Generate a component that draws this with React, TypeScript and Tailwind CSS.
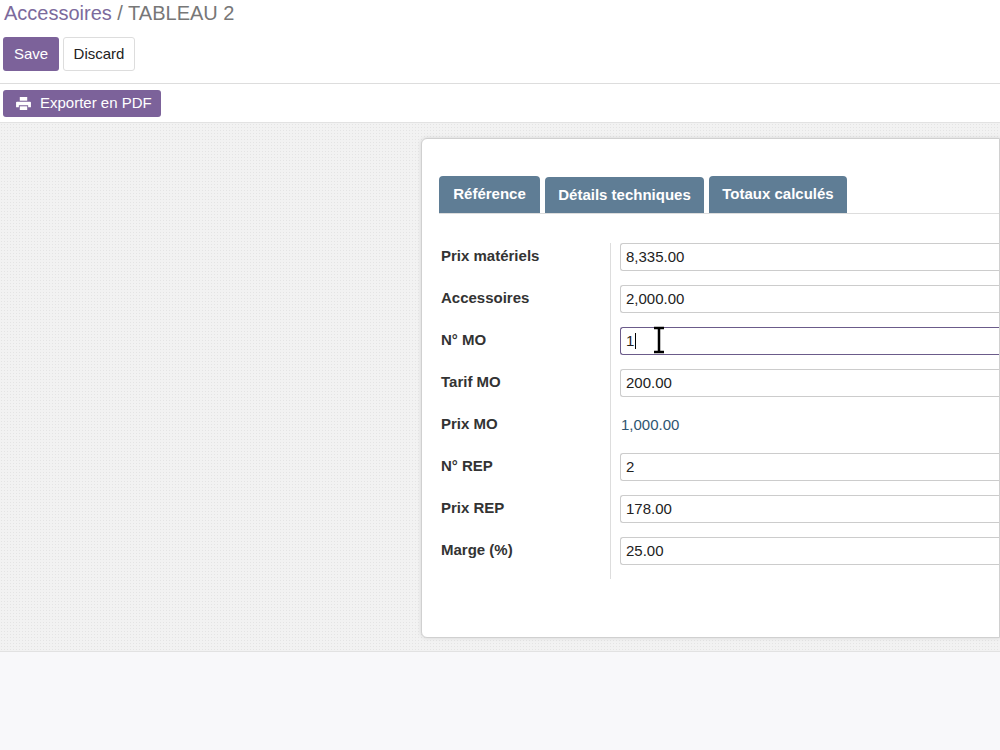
export default function App() {
  const rows: { label: string; value: string; input: boolean; focus?: boolean }[] = [
    { label: "Prix matériels", value: "8,335.00", input: true },
    { label: "Accessoires", value: "2,000.00", input: true },
    { label: "N° MO", value: "1", input: true, focus: true },
    { label: "Tarif MO", value: "200.00", input: true },
    { label: "Prix MO", value: "1,000.00", input: false },
    { label: "N° REP", value: "2", input: true },
    { label: "Prix REP", value: "178.00", input: true },
    { label: "Marge (%)", value: "25.00", input: true },
  ];
  const tabs = [
    { t: "Référence", w: "w-[101px]" },
    { t: "Détails techniques", w: "w-[159px]" },
    { t: "Totaux calculés", w: "w-[138px]" },
  ];
  return (
    <div className="w-[1000px] h-[750px] overflow-hidden bg-[#f8f8fa] text-[#333]" style={{ fontFamily: "'Liberation Sans', Arial, sans-serif" }}>
      <div className="bg-white">
        <div className="px-[4px] pt-[1px] h-[30px] text-[20px] leading-[24px]">
          <span className="text-[#7c6a9c]">Accessoires</span>
          <span className="text-[#777]"> / TABLEAU 2</span>
        </div>
        <div className="flex gap-[4px] px-[3px] pt-[7px] pb-[12px]">
          <button className="h-[34px] w-[56px] rounded-[3px] bg-[#7c629a] text-white text-[15px]">Save</button>
          <button className="h-[34px] w-[72px] rounded-[3px] bg-white border border-[#ddd] text-[#222] text-[15px]">Discard</button>
        </div>
        <div className="border-t border-[#ddd] px-[3px] pt-[6px] pb-[5px]">
          <button className="h-[27px] w-[158px] pl-[13px] flex items-center gap-[9px] rounded-[3px] bg-[#7c629a] text-white text-[15px]">
            <svg width="15" height="13" viewBox="0 0 16 14" fill="white">
              <rect x="4" y="0" width="8" height="4" />
              <path d="M1 5h14a1 1 0 0 1 1 1v5h-3v-2H3v2H0V6a1 1 0 0 1 1-1z" />
              <rect x="4" y="10" width="8" height="4" />
            </svg>
            Exporter en PDF
          </button>
        </div>
      </div>
      <div
        className="h-[530px] border-t border-b border-[#e2e2e2] pt-[15px] pl-[421px]"
        style={{ backgroundColor: "#f2f2f2", backgroundImage: "radial-gradient(#e4e4e4 0.6px, transparent 0.8px)", backgroundSize: "3px 3px" }}
      >
        <div className="h-[500px] bg-white border border-[#d0d0d0] rounded-l-[6px] shadow-[0_0_4px_rgba(0,0,0,0.12)] pt-[37px] pl-[17px]">
          <div className="flex gap-[5px] border-b border-[#ddd]">
            {tabs.map((x, i) => (
              <div key={x.t} className={`${x.w} flex items-center justify-center rounded-t-[4px] bg-[#5f7d95] text-white text-[15px] font-bold ${i === 1 ? "mt-[1px] h-[36px]" : "h-[37px]"}`}>
                {x.t}
              </div>
            ))}
          </div>
          <div className="flex pt-[29px]">
            <div className="w-[172px] border-r border-[#ddd]">
              {rows.map((r) => (
                <div key={r.label} className="h-[42px] pl-[2px] pt-[2px] text-[15px] font-bold text-[#333]">{r.label}</div>
              ))}
            </div>
            <div className="flex-1 pl-[9px]">
              {rows.map((r) => (
                <div key={r.label} className="h-[42px]">
                  {r.input ? (
                    <div className={`h-[28px] border rounded-l-[3px] border-r-0 flex items-center px-[5px] text-[15px] text-[#222] relative ${r.focus ? "border-[#6b5b8a]" : "border-[#ccc]"}`}>
                      {r.value}
                      {r.focus && <span className="inline-block w-[1px] h-[16px] bg-black ml-[1px]" />}
                      {r.focus && (
                        <svg className="absolute left-[31px] top-[-2px]" width="14" height="28" viewBox="0 0 14 28">
                          <path d="M2 2h10M7 2v24M2 26h10" stroke="black" strokeWidth="2.5" fill="none" />
                        </svg>
                      )}
                    </div>
                  ) : (
                    <div className="h-[28px] flex items-center pl-[1px] text-[15px] text-[#2e5570]">{r.value}</div>
                  )}
                </div>
              ))}
            </div>
          </div>
        </div>
      </div>
    </div>
  );
}
